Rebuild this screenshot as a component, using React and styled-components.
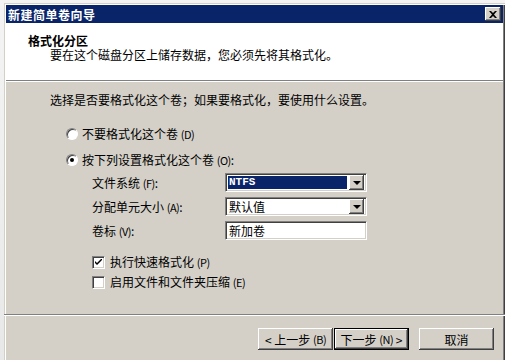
import React from 'react';
import styled, { createGlobalStyle } from 'styled-components';

const GlobalStyle = createGlobalStyle`
  html, body {
    margin: 0;
    padding: 0;
    background: #f4f4f4;
  }
  * { box-sizing: border-box; }
`

const font = `"SimSun", "Noto Sans CJK SC", "DejaVu Sans", sans-serif`

const Desktop = styled.div`
  width: 505px;
  height: 360px;
  overflow: hidden;
  padding: 3px 0 0 4px;
  font-family: ${font};
  font-size: 12px;
  color: #000;
  background: linear-gradient(#f4f4f4, #e8e8e8);
`

const Window = styled.div`
  width: 501px;
  height: 360px;
  background: #d4d0c8;
  padding: 2px;
  display: flex;
  flex-direction: column;
  box-shadow: inset 1px 1px 0 #d4d0c8, inset 2px 2px 0 #ffffff, inset -1px 0 0 #404040, inset -2px 0 0 #808080;
`

const TitleBar = styled.div`
  height: 18px;
  background: #0a246a;
  color: #fff;
  font-weight: bold;
  font-size: 12px;
  display: flex;
  align-items: center;
  justify-content: space-between;
  padding: 0 2px 0 2px;
  letter-spacing: 0.5px;
`

const CloseBtn = styled.div`
  width: 16px;
  height: 14px;
  background: #d4d0c8;
  box-shadow: inset -1px -1px 0 #404040, inset 1px 1px 0 #ffffff, inset -2px -2px 0 #808080;
  display: flex;
  align-items: center;
  justify-content: center;
`

const Header = styled.div`
  height: 58px;
  background: #fff;
  padding: 11px 0 0 22px;
  border-bottom: 1px solid #808080;
  box-shadow: 0 1px 0 #ffffff;
`

const HeaderTitle = styled.div`
  font-weight: bold;
  line-height: 13px;
  height: 13px;
`

const HeaderSub = styled.div`
  line-height: 13px;
  margin-top: 1px;
  padding-left: 22px;
`

const Body = styled.div`
  flex: 1;
  padding: 12px 0 0 44px;
  display: flex;
  flex-direction: column;
`

const Line = styled.div`
  line-height: 14px;
  margin-top: ${({ $top }) => $top || 0}px;
  padding-left: ${({ $indent }) => $indent || 0}px;
  display: flex;
  align-items: center;
  gap: ${({ $gap }) => $gap || 0}px;
`

const Radio = styled.span`
  width: 12px;
  height: 12px;
  border-radius: 50%;
  background: #fff;
  border: 1px solid;
  border-color: #808080 #ffffff #ffffff #808080;
  box-shadow: inset 1px 1px 0 #404040;
  display: flex;
  align-items: center;
  justify-content: center;
  &::after {
    content: '';
    width: 4px;
    height: 4px;
    border-radius: 50%;
    background: ${({ $on }) => ($on ? '#000' : 'transparent')};
  }
`

const FieldRow = styled.div`
  display: grid;
  grid-template-columns: 133px 142px;
  align-items: center;
  height: 19px;
  margin-top: ${({ $top }) => $top || 0}px;
  padding-left: 42px;
`

const Sunken = styled.div`
  height: 19px;
  background: #fff;
  border: 1px solid;
  border-color: #808080 #ffffff #ffffff #808080;
  box-shadow: inset 1px 1px 0 #404040, inset -1px -1px 0 #d4d0c8;
  display: flex;
  align-items: center;
  padding: 2px;
`

const SelectValue = styled.div`
  flex: 1;
  height: 13px;
  line-height: 13px;
  padding-left: 1px;
  background: ${({ $focus }) => ($focus ? '#0a246a' : 'transparent')};
  color: ${({ $focus }) => ($focus ? '#fff' : '#000')};
  font-weight: ${({ $mono }) => ($mono ? 'bold' : 'normal')};
  font-family: ${({ $mono }) => ($mono ? '"Liberation Mono", monospace' : 'inherit')};
  font-size: ${({ $mono }) => ($mono ? '11px' : '12px')};
`

const DropBtn = styled.div`
  width: 15px;
  height: 15px;
  margin-left: 2px;
  background: #d4d0c8;
  box-shadow: inset -1px -1px 0 #404040, inset 1px 1px 0 #ffffff, inset -2px -2px 0 #808080;
  display: flex;
  align-items: center;
  justify-content: center;
  &::after {
    content: '';
    border-left: 4px solid transparent;
    border-right: 4px solid transparent;
    border-top: 4px solid #000;
    margin-top: 1px;
  }
`

const Check = styled.span`
  width: 13px;
  height: 13px;
  background: #fff;
  border: 1px solid;
  border-color: #808080 #ffffff #ffffff #808080;
  box-shadow: inset 1px 1px 0 #404040, inset -1px -1px 0 #d4d0c8;
  display: flex;
  align-items: center;
  justify-content: center;
`

const Separator = styled.div`
  height: 2px;
  border-top: 1px solid #808080;
  border-bottom: 1px solid #ffffff;
  margin: 0 -2px 0 -2px;
`

const Footer = styled.div`
  height: 45px;
  display: flex;
  align-items: flex-start;
  padding: 12px 0 0 252px;
`

const Button = styled.div`
  width: ${({ $w }) => $w || 75}px;
  height: 22px;
  margin-left: ${({ $gap }) => $gap || 0}px;
  background: #d4d0c8;
  display: flex;
  align-items: center;
  justify-content: center;
  white-space: pre;
  box-shadow: ${({ $default }) =>
    $default
      ? 'inset 0 0 0 1px #000, inset -2px -2px 0 #404040, inset 2px 2px 0 #ffffff, inset -3px -3px 0 #808080'
      : 'inset -1px -1px 0 #404040, inset 1px 1px 0 #ffffff, inset -2px -2px 0 #808080'};
`

const Small = styled.span`
  font-size: 11px;
  letter-spacing: -0.5px;
`

export default function App() {
  return (
    <>
      <GlobalStyle />
      <Desktop>
        <Window>
          <TitleBar>
            <span>新建简单卷向导</span>
            <CloseBtn>
              <svg width="8" height="7" viewBox="0 0 8 7">
                <path d="M0 0h2l2 2 2-2h2L5 3.5 8 7H6L4 5 2 7H0l3-3.5z" fill="#000" />
              </svg>
            </CloseBtn>
          </TitleBar>
          <Header>
            <HeaderTitle>格式化分区</HeaderTitle>
            <HeaderSub>要在这个磁盘分区上储存数据，您必须先将其格式化。</HeaderSub>
          </Header>
          <Body>
            <Line $top={0}>选择是否要格式化这个卷；如果要格式化，要使用什么设置。</Line>
            <Line $top={20} $indent={16} $gap={4}>
              <Radio />
              <span>不要格式化这个卷 <Small>(D)</Small></span>
            </Line>
            <Line $top={12} $indent={16} $gap={4}>
              <Radio $on />
              <span>按下列设置格式化这个卷 <Small>(O)</Small>:</span>
            </Line>
            <FieldRow $top={6}>
              <span>文件系统 <Small>(F)</Small>:</span>
              <Sunken>
                <SelectValue $focus $mono>NTFS</SelectValue>
                <DropBtn />
              </Sunken>
            </FieldRow>
            <FieldRow $top={5}>
              <span>分配单元大小 <Small>(A)</Small>:</span>
              <Sunken>
                <SelectValue>默认值</SelectValue>
                <DropBtn />
              </Sunken>
            </FieldRow>
            <FieldRow $top={5}>
              <span>卷标 <Small>(V)</Small>:</span>
              <Sunken>
                <SelectValue>新加卷</SelectValue>
              </Sunken>
            </FieldRow>
            <Line $top={15} $indent={42} $gap={5}>
              <Check>
                <svg width="7" height="7" viewBox="0 0 7 7">
                  <path d="M0 2l2 2 5-5v2L2 6 0 4z" fill="#000" />
                </svg>
              </Check>
              <span>执行快速格式化 <Small>(P)</Small></span>
            </Line>
            <Line $top={6} $indent={42} $gap={5}>
              <Check />
              <span>启用文件和文件夹压缩 <Small>(E)</Small></span>
            </Line>
          </Body>
          <Separator />
          <Footer>
            <Button>{'< 上一步 '}<Small>(B)</Small></Button>
            <Button $default $gap={1}>{'下一步 '}<Small>(N)</Small>{' >'}</Button>
            <Button $gap={10}>取消</Button>
          </Footer>
        </Window>
      </Desktop>
    </>
  );
}
